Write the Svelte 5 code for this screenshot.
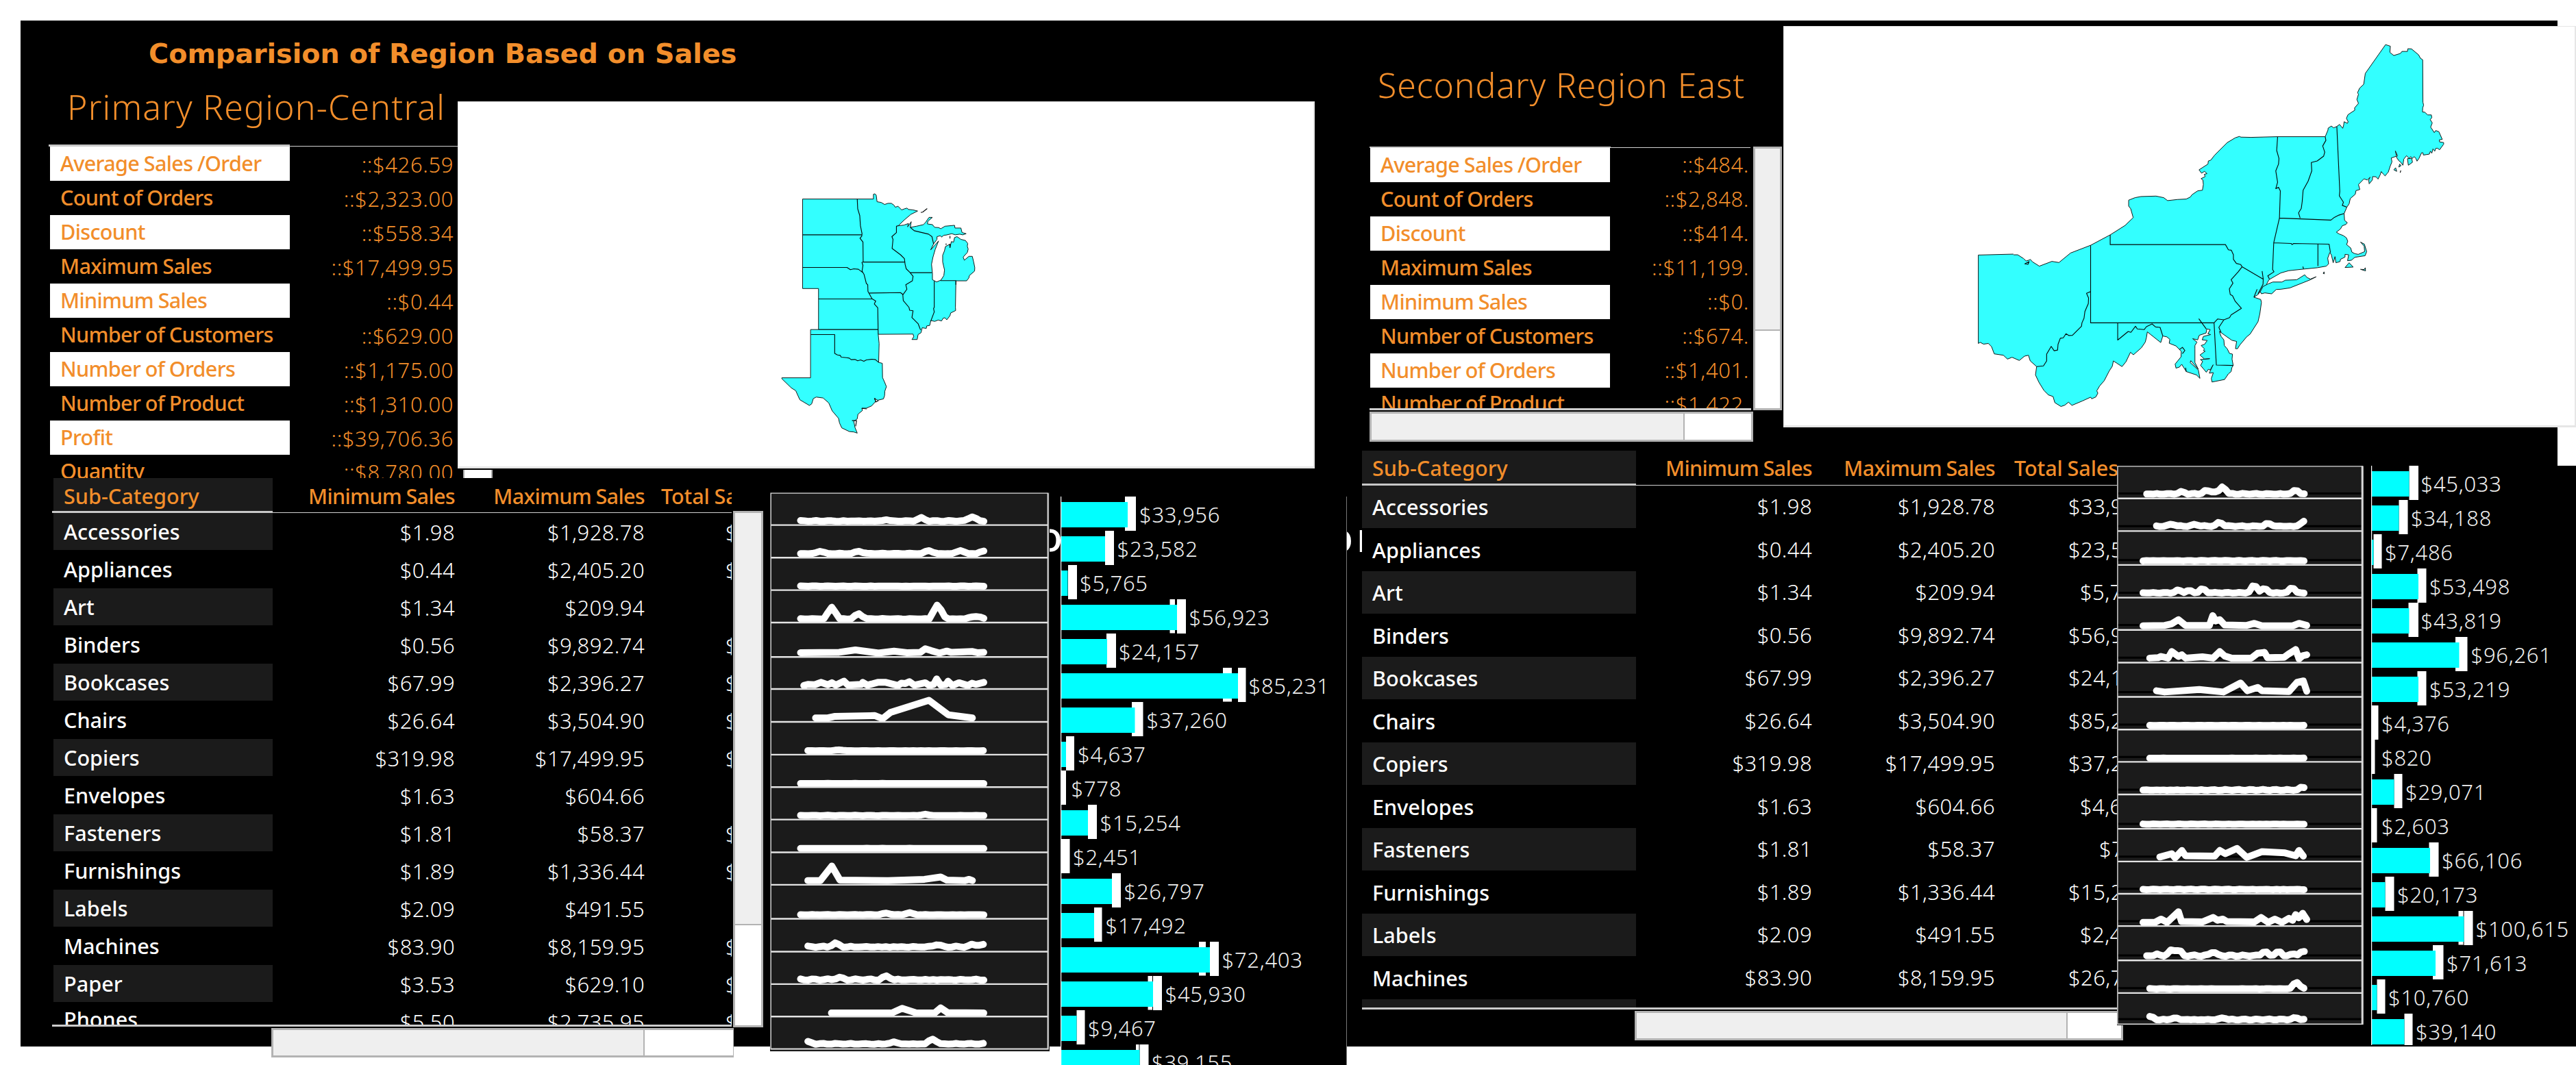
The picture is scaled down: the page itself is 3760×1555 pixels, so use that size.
<script>
  const primaryStats = [
    ['Average Sales /Order', '::$426.59'],
    ['Count of Orders', '::$2,323.00'],
    ['Discount', '::$558.34'],
    ['Maximum Sales', '::$17,499.95'],
    ['Minimum Sales', '::$0.44'],
    ['Number of Customers', '::$629.00'],
    ['Number of Orders', '::$1,175.00'],
    ['Number of Product', '::$1,310.00'],
    ['Profit', '::$39,706.36'],
    ['Quantity', '::$8,780.00'],
  ];
  const secondaryStats = [
    ['Average Sales /Order', '::$484.'],
    ['Count of Orders', '::$2,848.'],
    ['Discount', '::$414.'],
    ['Maximum Sales', '::$11,199.'],
    ['Minimum Sales', '::$0.'],
    ['Number of Customers', '::$674.'],
    ['Number of Orders', '::$1,401.'],
    ['Number of Product', '::$1,422.'],
  ];
  const categories = [
    ['Accessories', '$1.98', '$1,928.78', '$33,956'],
    ['Appliances', '$0.44', '$2,405.20', '$23,582'],
    ['Art', '$1.34', '$209.94', '$5,765'],
    ['Binders', '$0.56', '$9,892.74', '$56,923'],
    ['Bookcases', '$67.99', '$2,396.27', '$24,157'],
    ['Chairs', '$26.64', '$3,504.90', '$85,231'],
    ['Copiers', '$319.98', '$17,499.95', '$37,260'],
    ['Envelopes', '$1.63', '$604.66', '$4,637'],
    ['Fasteners', '$1.81', '$58.37', '$778'],
    ['Furnishings', '$1.89', '$1,336.44', '$15,254'],
    ['Labels', '$2.09', '$491.55', '$2,451'],
    ['Machines', '$83.90', '$8,159.95', '$26,797'],
    ['Paper', '$3.53', '$629.10', '$17,492'],
    ['Phones', '$5.50', '$2,735.95', '$72,403'],
  ];

  // Sales bars: label, bar length, reference mark [from, to], label offset, extra tick [from, to]
  const primaryBars = [
    ['$33,956', 98, 94, 110, 115.5],
    ['$23,582', 65, 65, 78, 83],
    ['$5,765', 10.5, 11, 24, 28.5],
    ['$56,923', 170, 170, 183, 188, 159.5, 167],
    ['$24,157', 68, 67, 81, 85.5],
    ['$85,231', 259, 259, 270.5, 275, 237, 250],
    ['$37,260', 108.5, 104, 120.5, 126],
    ['$4,637', 8, 8, 20, 25.5],
    ['$778', 0, 0, 8, 16],
    ['$15,254', 40, 40, 53, 58],
    ['$2,451', 0, 0, 13.5, 18.5],
    ['$26,797', 75, 75, 88, 93],
    ['$17,492', 49, 49, 60.5, 66],
    ['$72,403', 218, 218, 231, 236, 202, 212],
    ['$45,930', 135, 135, 148, 153, 127.5, 134],
    ['$9,467', 23.5, 23.5, 35.5, 40.5],
    ['$39,155', 115.5, 115.5, 128.5, 133.5, 110, 114.5],
  ];
  const secondaryBars = [
    ['$45,033', 55.5, 55.5, 69, 73],
    ['$34,188', 40.5, 40.5, 53.5, 58.5],
    ['$7,486', 3.5, 3.5, 15.5, 20.5],
    ['$53,498', 69, 67.5, 80.5, 85.5],
    ['$43,819', 55.5, 54.5, 69, 73],
    ['$96,261', 128.5, 123, 140.5, 146],
    ['$53,219', 69, 67.5, 80.5, 85.5],
    ['$4,376', 0, 0, 10.5, 15.5],
    ['$820', 0, 0, 5.5, 15.5],
    ['$29,071', 33.5, 33.5, 45.5, 50.5],
    ['$2,603', 0, 0, 8.5, 15.5],
    ['$66,106', 86, 84.5, 98.5, 103.5],
    ['$20,173', 20.5, 20.5, 33.5, 38.5],
    ['$100,615', 135.5, 135.5, 148.5, 153, 127.5, 134.5],
    ['$71,613', 94, 90, 105.5, 110.5],
    ['$10,760', 8.5, 8.5, 20.5, 25.5],
    ['$39,140', 48.5, 48.5, 60.5, 65.5],
  ];

  // Trend line: start, end, baseline, jitter, peaks [x, height]
  function trend(x0, x1, base, jitter, peaks, step) {
    const pts = [];
    for (let x = x0, i = 0; x <= x1 + 1; x += step, i++) {
      let y = base - jitter * Math.abs(Math.sin(i * 2.3 + base) * Math.cos(i * 0.9));
      for (const [px, h] of peaks) {
        const d = Math.abs(x - px) / (step * 1.7);
        if (d < 1) y -= h * Math.min(1, (1 - d) * 1.25);
      }
      pts.push(x.toFixed(1) + ',' + y.toFixed(1));
    }
    return pts.join(' ');
  }
  const L = (x0, base, jitter, peaks) => trend(x0, 601, base, jitter, peaks, 9.6);
  const R = (x0, base, jitter, peaks) => trend(x0, 686, base, jitter, peaks, 11.2);

  const primaryRules = [187.5, 271, 354, 437, 525, 607, 691, 775, 858, 941, 1025, 1108, 1195, 1279, 1362, 1445];
  const primaryTrends = [
    L(150, 178, 2.5, [[447, 8], [572, 11], [360, 3]]),
    L(150, 261, 1.5, [[198, 6], [293, 6], [466, 8], [543, 8], [601, 7]]),
    L(150, 344, 0.8, []),
    L(150, 428, 1.5, [[227, 30], [293, 13], [485, 30], [496, 10], [572, 5], [590, 5]]),
    '150,514 245,513 285,507 342,515 380,510 412,514 445,513 457,504 472,509 492,515 510,510 520,513 572,511 585,514 601,513',
    '158,598 168,595 185,596 200,590 217,596 227,591 237,597 257,587 267,597 300,595 303,590 315,597 340,590 360,590 390,598 398,592 408,593 418,588 430,597 457,591 467,598 478,595 485,581 495,597 508,595 513,587 524,598 540,591 562,598 572,592 582,595 601,590',
    '187,681 217,681 235,677 333,675 352,683 371,667 466,636 514,673 573,681',
    L(168, 765, 0.5, [[245, 2]]),
    L(150, 849, 0.5, []),
    L(150, 931, 1, [[457, 3]]),
    L(150, 1015, 0.4, []),
    '168,1097 199,1097 227,1060 247,1096 365,1097 455,1094 495,1088 510,1096 555,1097 565,1094 573,1097',
    L(150, 1185, 1.2, [[361, 4], [418, 5]]),
    L(168, 1268, 3.5, [[236, 9], [485, 6], [575, 5], [595, 5]]),
    L(150, 1352, 3.5, [[245, 5], [361, 9]]),
    '226,1436 375,1436 400,1424 435,1436 480,1436 495,1423 512,1435 601,1436',
    L(168, 1516, 2.5, [[168, 5], [380, 5], [475, 13]]),
  ];
  const secondaryRules = [180, 260, 343, 423, 502, 582, 666, 746, 825, 905, 989, 1069, 1148, 1227, 1311, 1391];
  const secondaryTrends = [
    R(163, 170, 2.5, [[278, 5], [357, 7], [380, 6], [412, 17], [650, 9]]),
    R(195, 249, 2.5, [[245, 5], [323, 4], [402, 9], [560, 7], [673, 9], [686, 5]]),
    R(151, 333, 1.2, []),
    R(151, 412, 2, [[267, 6], [301, 5], [346, 9], [515, 18], [548, 10], [638, 12]]),
    '151,492 222,491 245,487 267,477 290,491 368,491 379,467 388,480 402,477 418,490 490,491 515,486 540,492 640,492 661,486 686,491',
    '173,571 200,570 210,567 233,571 245,555 267,567 278,563 290,571 345,568 380,571 402,555 418,566 440,571 505,571 526,559 548,557 558,570 612,569 625,562 650,550 661,573 673,565 686,563',
    '195,651 222,654 335,648 414,654 470,632 492,651 526,643 540,651 628,653 655,630 675,627 686,652',
    R(173, 736, 0.6, []),
    R(173, 816, 0.2, []),
    R(151, 895, 2.5, [[673, 7]]),
    R(151, 978, 1, []),
    '206,1058 245,1050 256,1060 278,1042 290,1055 385,1056 402,1042 420,1050 458,1037 490,1059 540,1045 615,1048 650,1055 661,1042 675,1056',
    R(151, 1138, 1.5, []),
    '151,1218 190,1218 210,1210 230,1218 267,1192 277,1216 345,1217 380,1206 395,1213 412,1210 425,1216 515,1217 537,1206 560,1218 582,1210 605,1218 628,1208 640,1213 650,1199 660,1207 673,1196 686,1211',
    R(163, 1301, 3.5, [[200, 3], [245, 13], [267, 13], [380, 9], [548, 10], [593, 10], [640, 4], [673, 11]]),
    R(173, 1381, 1, [[650, 13], [661, 4]]),
    R(173, 1457, 2.5, [[176, 7], [256, 4], [412, 4], [650, 4]]),
  ];
</script>

{#snippet stats(rows)}
  {#each rows as [name, value], i}
    <div class="stat" class:last={i === rows.length - 1}>
      <span class="stat-name" class:banded={i % 2 === 0}>{name}</span>
      <span class="stat-value">{value}</span>
    </div>
  {/each}
{/snippet}

{#snippet table(rows)}
  <div class="row head">
    <span class="name banded">Sub-Category</span>
    <span class="min">Minimum Sales</span>
    <span class="max">Maximum Sales</span>
    <span class="total">Total Sales</span>
  </div>
  <div class="head-rule"><i></i></div>
  <div class="rows">
    {#each rows as [name, min, max, total], i}
      <div class="row" class:last={i === rows.length - 1}>
        <span class="name" class:banded={i % 2 === 0}>{name}</span>
        <span class="min">{min}</span>
        <span class="max">{max}</span>
        <span class="total" class:four={total.length === 6} class:three={total.length === 4}>{total}</span>
      </div>
    {/each}
  </div>
{/snippet}

{#snippet bars(data, w, h)}
  <svg class="bars" width={w} height={h} viewBox="0 0 {w} {h}">
    <rect width={w} height={h} fill="#000" />
    {#each data as [label, len, m0, m1, tx, t0, t1], i}
      {#if t0}<rect x={t0} y={i * 50} width={t1 - t0} height="49.5" fill="#fff" />{/if}
      <rect x={m0} y={i * 50} width={m1 - m0} height="50" fill="#fff" />
      <rect x="0" y={i * 50 + 8} width={len} height="37" fill="#0ff" />
      <text x={tx - 0.5} y={i * 50 + 38.2}>{label}</text>
    {/each}
    <rect width="1.2" height={h} fill="#fff" />
  </svg>
{/snippet}

<div class="board">
  <section class="region primary">
    <h1>Comparision of Region Based on Sales</h1>
    <div class="upper">
      <div class="summary">
        <h2>Primary Region-Central</h2>
        <div class="stat-rule"><i></i></div>
        <div class="stat-list">{@render stats(primaryStats)}</div>
      </div>
      <div class="map-col">
        <svg class="map" viewBox="-1296 -306 3753 1608" preserveAspectRatio="none">
          <path class="land" d="M215,122H526L526,101 532,99 538,104 542,134 560,137 575,146 590,141 605,141 616,149 622,158 634,154 650,170 660,166 673,162 680,168 700,170 720,175 690,190 662,214 635,240 660,237 680,230 676,245 692,222 688,247 715,242 745,235 755,225 770,203 785,203 765,220 763,232 785,235 795,247 812,248 822,253 840,242 882,238 884,250 910,250 915,270 933,275 918,280 905,277 885,280 870,275 845,281 835,282 825,290 820,284 805,288 805,300 790,320 777,347 812,307 797,345 787,380 781,410 785,450 785,478 803,488 822,480 835,460 838,435 830,400 830,370 838,350 842,332 860,322 862,337 868,310 878,312 882,292 893,288 910,300 930,305 940,318 938,330 942,343 938,358 920,378 925,392 945,375 960,375 966,400 971,425 970,440 947,460 945,470 935,483 888,483 886,600 887,614 865,625 862,637 848,655 840,646 832,648 825,660 810,656 795,662 778,658 773,680 760,682 758,693 740,690 735,712 722,720 718,742 695,742 703,730 700,718 547,719 551,760 549,843 565,847 566,910 575,930 583,950 576,970 575,990 570,1004 545,1010 530,1002 536,1015 518,1035 495,1045 475,1045 478,1055 458,1072 455,1092 440,1103 445,1130 455,1155 440,1150 420,1148 387,1132 377,1110 373,1090 345,1057 330,1022 305,1000 275,996 262,1003 255,1026 245,1033 203,1008 185,968 165,955 124,915 124,911 250,911V698H285V517H215Z" />
          <path class="borders" d="M215,280H475M215,424H410L425,434 440,430 460,432 480,447M455,122L457,165 466,195 469,240 476,275 475,285 467,295 480,312 481,400M475,402L481,400H662M475,400L480,415 476,440 485,455 495,495 501,500 502,530 520,562 536,572 530,585 545,602 547,719M285,563H520M285,698H545M505,538L510,537 645,535 657,545M635,240L627,242V270L607,288 612,300 608,340 645,368 662,385 665,410 670,430 685,445 700,463 697,483 668,500 673,520 655,545 657,570 682,600 685,613 700,615 695,645 722,672 733,700M685,447H783M793,484V600L790,605 793,620 778,660M820,482H888V500M688,247L705,262 768,277 783,288 790,320M251,720H356V803L368,810 380,812 385,820 408,822 420,824 428,831 445,830 457,836 470,832 484,838 495,832 520,829 535,831 549,843M734,181L742,180 762,164M532,1000L536,1018 548,1012M475,1046L497,1048M432,1100H452L448,1125M862,285V296M845,318V325M862,320V337" />
        </svg>
        <div class="stub"></div>
      </div>
    </div>
    <div class="lower">
      <div class="table-col">
        <div class="table">{@render table(categories)}</div>
        <div class="hscroll"><i></i></div>
      </div>
      <div class="vscroll"><i></i></div>
      <svg class="sparks" viewBox="75 104 688 1430" preserveAspectRatio="none">
        <rect x="75" y="104" width="688" height="1430" fill="#1b1b1b" />
        {#each primaryTrends as points}<polyline {points} />{/each}
        {#each primaryRules as y}<path class="rule" d="M77,{y}H758" />{/each}
        <path class="frame" d="M77,106H759V1528H77Z" />
        <path class="edge thin" d="M759,106V1528H77" />
      </svg>
      <div class="ghost first"><span>o</span></div>
      <div class="bars-box">{@render bars(primaryBars, 417, 830)}</div>
    </div>
  </section>

  <section class="region secondary">
    <div class="upper">
      <div class="summary">
        <h2>Secondary Region East</h2>
        <div class="summary-body">
          <div class="stat-frame">
            <div class="stat-rule"><i></i></div>
            <div class="stat-list">{@render stats(secondaryStats)}</div>
            <div class="hscroll"><i></i></div>
          </div>
          <div class="vscroll"><i></i></div>
        </div>
      </div>
      <svg class="map" viewBox="-801 -36 3471 1758" preserveAspectRatio="none">
        <path class="land" d="M52,971L205,967 208,970 225,970 250,986 262,997 276,993 280,990 290,1001 320,1020 375,999 406,1004 457,962 545,928 631,882 697,840 706,831 732,806 721,767 712,755 712,729 740,718 766,713 832,711 866,718 883,731 926,726 965,724 983,715 990,705 1015,688 1036,685 1040,660 1038,640 1030,634 1048,625 1044,615 1056,612 1045,602 1032,610 1021,595 1060,570 1062,556 1072,553 1090,530 1145,475 1180,454 1198,448 1205,451 1250,452 1366,449 1575,449 1587,420 1588,411 1602,402 1612,410 1626,404 1638,395 1646,405 1652,412 1656,398 1658,383 1672,390 1676,384 1668,368 1675,352 1705,332 1704,322 1721,302 1714,285 1721,262 1717,255 1726,235 1744,218 1751,170 1840,43 1861,50 1859,77 1876,91 1905,82 1912,73 1936,73 1938,61 1954,62 1985,88 1993,103 2003,110 2004,297 2007,310 2003,322 2002,340 2012,341 2025,353 2041,353 2043,365 2036,374 2045,388 2038,407 2054,431 2060,422 2074,427 2089,461 2076,463 2077,472 2095,475 2095,482 2077,507 2068,500 2060,501 2056,513 2048,503 2043,522 2037,513 2032,526 2020,528 2006,530 2004,520 1998,520 1986,546 1978,557 1973,545 1965,537 1958,545 1950,537 1944,545 1932,533 1920,548 1916,575 1905,560 1898,555 1888,540 1892,532 1883,512 1888,535 1865,543 1868,560 1860,580 1852,605 1846,612 1838,622 1830,614 1821,603 1816,618 1807,636 1798,626 1783,625 1782,640 1768,657 1766,640 1772,628 1760,640 1745,635 1721,660 1727,682 1710,687 1707,703 1685,722 1680,745 1670,760 1658,788 1660,818 1672,828 1666,836 1650,842 1642,856 1624,870 1636,878 1654,885 1668,895 1674,910 1669,925 1687,940 1692,958 1705,965 1720,968 1748,956 1746,932 1730,914 1747,923 1757,956 1750,974 1705,981 1690,994 1673,996 1678,970 1662,968 1662,980 1642,990 1640,1000 1622,1005 1618,978 1610,1005 1602,970 1595,960 1586,985 1590,1010 1580,1020 1540,1027 1480,1033 1415,1040 1380,1050 1350,1067 1328,1080 1320,1095 1315,1108 1302,1110 1296,1124 1290,1132 1280,1145 1262,1157 1292,1167 1295,1180 1288,1230 1280,1265 1245,1320 1230,1332 1200,1368 1190,1384 1181,1384 1186,1352 1165,1347 1120,1315 1110,1308 1118,1330 1130,1345 1132,1370 1145,1385 1155,1405 1168,1408 1166,1430 1171,1458 1165,1468 1162,1485 1150,1495 1133,1520 1078,1531 1075,1515 1084,1490 1066,1492 1083,1455 1070,1478 1062,1475 1053,1488 1028,1458 1037,1440 1027,1432 1068,1428 1045,1430 1025,1412 1048,1395 1040,1392 1045,1385 1030,1370 1045,1365 1057,1348 1035,1345 1040,1330 1072,1322 1060,1318 1070,1300 1055,1297 1052,1315 1022,1325 1015,1345 993,1340 1012,1355 1003,1370 1003,1385 1003,1445 1018,1475 985,1437 982,1445 1018,1478 1025,1515 1010,1500 965,1485 945,1453 935,1465 920,1470 916,1452 942,1420 943,1396 920,1372 890,1360 893,1343 880,1332 862,1328 853,1357 794,1310 790,1335 785,1355 768,1380 733,1411 720,1400 700,1442 683,1463 660,1448 645,1438 640,1462 627,1482 605,1525 585,1548 572,1570 577,1580 568,1597 550,1605 545,1598 508,1615 463,1634 448,1620 432,1633 415,1639 388,1622 380,1595 360,1588 340,1568 318,1532 303,1500 308,1463 280,1438 272,1413 255,1417 232,1436 200,1422 180,1430 162,1413 122,1407 110,1375 96,1361 75,1364 60,1356 52,1361Z" />
        <path class="land" d="M1302,1110L1325,1098 1345,1090 1385,1090 1400,1082 1450,1080 1485,1058 1495,1070 1510,1077 1535,1067 1510,1080 1420,1116 1380,1122 1360,1123 1340,1142 1310,1138 1295,1142 1290,1132ZM1662,1026L1680,1005 1698,1024ZM1730,1034L1752,1041 1751,1027 1746,1035ZM1566,1052L1570,1045 1571,1054ZM1936,546L1955,545 1958,562 1940,575ZM1876,595L1884,586 1889,602ZM1898,583L1902,570 1908,577Z" />
        <path class="borders" d="M545,928V1270H1087M545,1132L527,1140 536,1160 535,1185 520,1220 516,1250 507,1270 505,1285 465,1325 450,1326 437,1318 425,1336 412,1338 402,1365 400,1390 385,1393 372,1374 352,1408 352,1438 338,1460 308,1463M664,1270V1346L710,1308 722,1312 742,1285 750,1297 780,1300 790,1287 815,1275 830,1288 850,1290 862,1328M631,882V925H1137L1150,948 1163,950 1172,970 1172,990 1185,1008 1204,1013 1210,1023 1302,1077M1210,1023L1193,1045 1162,1080 1170,1095 1154,1120 1158,1145 1168,1150 1180,1175 1207,1206 1162,1235 1155,1247 1130,1257 1108,1290 1118,1313M1087,1270L1103,1253 1130,1257M1087,1270L1097,1456 1171,1458M1280,1142L1302,1100 1303,1077 1298,1042M1262,1157L1276,1122M1366,449L1364,480 1362,510 1372,545 1370,570 1358,600 1366,650 1358,678 1370,672 1378,688 1374,808 1349,917 1344,1035 1350,1045 1323,1063 1330,1077M1374,808L1600,817 1615,805 1635,795 1658,788M1349,917L1425,920 1430,925 1436,920 1592,923 1598,960M1543,922V1020M1575,449L1578,465 1564,490 1573,517 1568,535 1540,556 1514,563 1516,600 1500,645 1478,685 1474,735 1470,765 1458,785 1465,808M1626,404L1639,690 1637,710 1655,738 1650,752 1670,760M1020,1252L1053,1297M256,1010L275,1000 270,1012ZM935,1388L948,1378 959,1392 948,1406M962,1468L965,1485M1480,1033L1477,1022M1907,598L1904,608" />
      </svg>
    </div>
    <div class="lower">
      <div class="ghost second"><span>or</span></div>
      <div class="table-col">
        <div class="table">{@render table(categories.slice(0, 13))}</div>
        <div class="hscroll"><i></i></div>
      </div>
      <svg class="sparks" viewBox="66 100 806 1370" preserveAspectRatio="none">
        <rect x="66" y="100" width="806" height="1370" fill="#1b1b1b" />
        {#each [...secondaryRules, 1467] as y}<path class="base" d="M69,{y - 12}H865" />{/each}
        {#each secondaryTrends as points}<polyline {points} />{/each}
        {#each secondaryRules as y}<path class="rule" d="M69,{y}H866" />{/each}
        <path class="frame" d="M68,101.5H868V1467H68Z" />
        <path class="edge" d="M868,101V1468" />
      </svg>
      <div class="bars-box">{@render bars(secondaryBars, 299, 846)}</div>
    </div>
  </section>
</div>

<style>
  :global(body) { background: #fff; overflow: hidden; }
  .board {
    box-sizing: border-box; width: 3760px; height: 1555px; overflow: hidden;
    padding: 30px 0 0 30px; display: flex; align-items: flex-start;
    font-family: "Noto Sans", "Open Sans", sans-serif; font-size: 30.6px; color: #fff;
  }
  .region { height: 1498px; background: #000; display: flex; flex-direction: column; flex: none; }
  .primary { width: 1936px; }
  .secondary { width: 1794px; background: linear-gradient(#fff, #fff) right top / 27px 650px no-repeat, #000; }
  h1, h2 { margin: 0; color: #f28e2b; white-space: nowrap; }
  h1 {
    height: 88px; padding-left: 187px; box-sizing: border-box;
    font: bold 39.7px/97px "DejaVu Sans", sans-serif;
  }
  h2 { font-weight: 300; font-size: 50px; box-sizing: border-box; }
  .upper, .lower { display: flex; align-items: flex-start; }
  .primary .upper { height: 580px; }
  .primary .summary { width: 638px; height: 580px; overflow: hidden; }
  .primary h2 { height: 93px; line-height: 77px; padding-left: 68px; letter-spacing: 1.2px; }
  .primary .stat-rule { height: 3px; margin-left: 41px; }
  .stat-rule, .head-rule {
    display: flex; height: 3px;
    background: linear-gradient(#d0d0d0, #d0d0d0) left 2px / 100% 1px no-repeat;
  }
  .stat-rule i, .head-rule i { background: #c8c8c8; }
  .primary .stat-rule i { width: 352px; }
  .stat-list { overflow: hidden; color: #f28e2b; }
  .primary .stat-list { margin-left: 43px; height: 484px; }
  .stat { display: flex; height: 50px; line-height: 49px; white-space: nowrap; }
  .stat-name {
    width: 350px; padding-left: 15px; box-sizing: border-box; flex: none;
    font-weight: 500; letter-spacing: -0.7px; word-spacing: -0.6px;
  }
  .stat-name.banded { background: #fff; }
  .stat-value { flex: 1; text-align: right; font-weight: 300; font-size: 31px; line-height: 52px; letter-spacing: 0.6px; }
  .primary .stat-value { padding-right: 6px; }
  .primary .stat.last { line-height: 46px; }
  .primary .stat.last .stat-value { line-height: 50px; }
  .map { background: #fff; border: solid #e6e6e6; border-width: 1px 2px 3px 1px; box-sizing: border-box; display: block; flex: none; }
  .map-col { padding-top: 30px; }
  .map-col .map { width: 1251px; height: 536px; }
  .stub { width: 39px; height: 12px; margin: 2px 0 0 8px; background: #fff; border: solid #aaa; border-width: 0 2px; box-sizing: content-box; }
  .land { fill: #33ffff; stroke: #101818; stroke-width: 3; stroke-linejoin: round; }
  .borders { fill: none; stroke: #050808; stroke-width: 3.4; stroke-linejoin: round; }

  .primary .lower { padding-left: 46px; }
  .table { overflow: hidden; border-bottom: 3px solid #ccc; box-sizing: border-box; }
  .primary .table-col { width: 995px; flex: none; }
  .primary .table { width: 992px; height: 801px; }
  .row { display: flex; white-space: nowrap; }
  .row span { flex: none; box-sizing: border-box; }
  .name { margin-left: 2px; padding-left: 15px; font-weight: 500; }
  .name.banded { background: #1b1b1b; }
  .min, .max, .total { font-weight: 300; font-size: 31px; text-align: right; letter-spacing: 0.4px; }
  .total { text-align: left; }
  .head { color: #f28e2b; }
  .head .min, .head .max, .head .total { font-weight: 500; font-size: 30.6px; letter-spacing: -0.7px; word-spacing: -0.8px; }
  .head .total { letter-spacing: -0.1px; word-spacing: -1px; }
  .primary .row { height: 55px; line-height: 56px; }
  .primary .rows .name { line-height: 55px; }
  .primary .head { height: 48px; line-height: 52px; }
  .primary .name { width: 320px; }
  .primary .name.banded { height: 54px; }
  .primary .head .name.banded { height: 48px; }
  .primary .min { width: 266px; }
  .primary .max { width: 277px; }
  .primary .total { padding-left: 118px; }
  .primary .total.four { padding-left: 135px; }
  .primary .head .total { padding-left: 24px; }
  .primary .head-rule i { width: 322px; }
  .primary .rows .row.last .name { line-height: 48px; }
  .hscroll, .vscroll { display: flex; box-sizing: border-box; background: #fff; border: 3px solid #b3b3b3; flex: none; }
  .hscroll i, .vscroll i { background: #efefef; }
  .vscroll { flex-direction: column; }
  .vscroll i { border-bottom: 2px solid #b3b3b3; }
  .hscroll i { border-right: 2px solid #b3b3b3; }
  .primary .lower .hscroll { width: 675px; height: 43px; margin: 2px 0 0 320px; border-right-width: 1px; }
  .primary .lower .hscroll i { width: 540px; }
  .primary .lower .vscroll { width: 44px; height: 754px; margin: 48px 0 0 -1px; }
  .primary .lower .vscroll i { height: 600px; }
  .sparks { flex: none; display: block; position: relative; }
  .primary .sparks { width: 408px; height: 816px; margin: 21px 0 0 10px; }
  .sparks * { vector-effect: non-scaling-stroke; }
  polyline { fill: none; stroke: #fff; stroke-width: 10; stroke-linecap: round; stroke-linejoin: round; }
  .rule { stroke: #e4e4e4; stroke-width: 2.4; fill: none; }
  .base { stroke: #000; stroke-width: 3; fill: none; }
  .frame { stroke: #d8d8d8; stroke-width: 1.4; fill: none; }
  .edge { stroke: #d8d8d8; stroke-width: 3; fill: none; }
  .edge.thin { stroke-width: 2; }
  .ghost { overflow: hidden; display: flex; justify-content: flex-end; font-size: 59px; line-height: 60px; font-weight: 500; flex: none; }
  .ghost.first { width: 16px; margin-top: 54px; }
  .ghost.first span { margin-right: -3px; }
  .ghost.second { width: 22px; margin-top: 95px; justify-content: flex-start; letter-spacing: 5px; }
  .ghost.second span { margin-left: -27px; }
  .bars-box { flex: none; height: 0; }
  .bars { display: block; }
  .bars text { fill: #f0f0f0; font-weight: 300; font-size: 31px; letter-spacing: 0.7px; }
  .primary .bars-box { margin-top: 27px; }
  .primary .bars { border-right: 1px solid #777; }

  .secondary .upper { height: 628px; }
  .secondary .summary { width: 637px; }
  .secondary h2 { height: 184px; line-height: 188px; padding-left: 45px; font-size: 50px; letter-spacing: 0.9px; }
  .summary-body { display: flex; padding-left: 33px; }
  .stat-frame { width: 560px; }
  .secondary .stat-rule { width: 556px; height: 2px; background-position: left 1px; }
  .secondary .stat-rule i { width: 352px; }
  .secondary .stat-list { width: 557px; height: 383px; box-sizing: border-box; padding-left: 1px; border-bottom: 3px solid #ccc; }
  .secondary .stat-value { padding-right: 3px; line-height: 49px; }
  .secondary .stat.last .stat-name { line-height: 44px; }
  .secondary .upper .hscroll { width: 560px; height: 44px; margin-top: 2px; }
  .secondary .upper .hscroll i { width: 455px; }
  .secondary .upper .vscroll { width: 42px; height: 385px; }
  .secondary .upper .vscroll i { height: 264px; }
  .secondary .map { width: 1157px; height: 586px; margin-top: 8px; }

  .secondary .table-col { width: 1102px; flex: none; }
  .secondary .table { width: 1102px; height: 816px; }
  .secondary .row { height: 62.5px; line-height: 63px; }
  .secondary .row .min, .secondary .row .max, .secondary .row .total { line-height: 60px; }
  .secondary .head { height: 48px; line-height: 50px; }
  .secondary .head .min, .secondary .head .max, .secondary .head .total { line-height: 50px; }
  .secondary .name { width: 400px; margin-left: 0; }
  .secondary .name.banded { height: 62px; }
  .secondary .head .name.banded { height: 48px; }
  .secondary .head-rule i { width: 400px; }
  .secondary .min { width: 257px; }
  .secondary .max { width: 267px; }
  .secondary .total { padding-left: 107px; }
  .secondary .total.four { padding-left: 124px; }
  .secondary .total.three { padding-left: 152px; }
  .secondary .head .total { padding-left: 28px; }
  .secondary .lower .hscroll { width: 713px; height: 43px; margin: 2px 0 0 398px; }
  .secondary .lower .hscroll i { width: 627px; }
  .secondary .sparks { width: 360px; height: 817px; margin-top: 22px; }
  .secondary .bars-box { margin: 22px 0 0 11px; }
</style>
